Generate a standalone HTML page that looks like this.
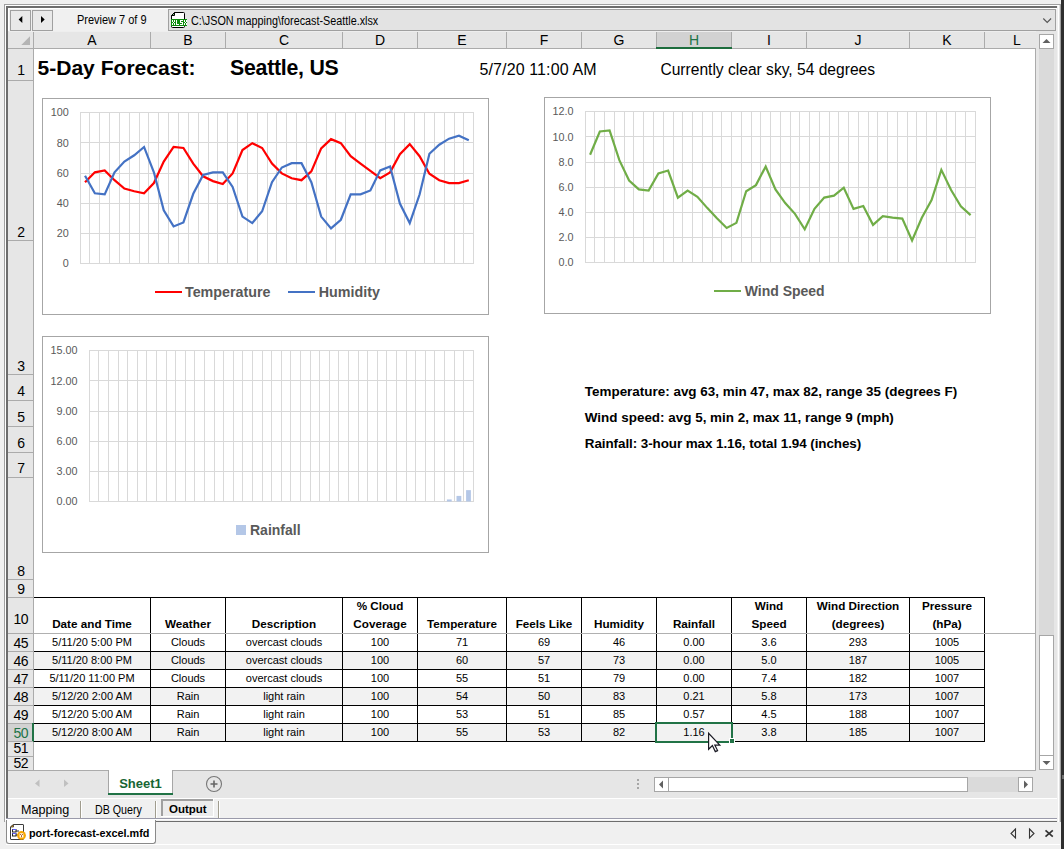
<!DOCTYPE html>
<html><head><meta charset="utf-8"><style>
html,body{margin:0;padding:0;width:1064px;height:849px;overflow:hidden;background:#f0f0f0;}
body{position:relative;font-family:"Liberation Sans", sans-serif;}
.r,.t{position:absolute;}
.t{white-space:nowrap;}
</style></head><body>
<div class="r" style="left:0px;top:0px;width:1064px;height:849px;background:#f0f0f0;"></div>
<div class="r" style="left:4px;top:4px;width:1056px;height:1px;background:#a0a0a0;"></div>
<div class="r" style="left:4px;top:4px;width:1px;height:818px;background:#a0a0a0;"></div>
<div class="r" style="left:5px;top:5px;width:1055px;height:1px;background:#ffffff;"></div>
<div class="r" style="left:5px;top:5px;width:1px;height:816px;background:#ffffff;"></div>
<div class="r" style="left:6px;top:6px;width:1051px;height:2px;background:#6d6d6d;"></div>
<div class="r" style="left:6px;top:6px;width:2px;height:812px;background:#6d6d6d;"></div>
<div class="r" style="left:1061px;top:0px;width:3px;height:849px;background:#2e2e2e;"></div>
<div class="r" style="left:1058px;top:5px;width:1px;height:817px;background:#ffffff;"></div>
<div class="r" style="left:1059px;top:5px;width:1px;height:817px;background:#e0e0e0;"></div>
<div class="r" style="left:1060px;top:4px;width:1px;height:818px;background:#a0a0a0;"></div>
<div class="r" style="left:1062px;top:775px;width:2px;height:4px;background:#707070;"></div>
<div class="r" style="left:8px;top:8px;width:160px;height:23px;background:#f0f0f0;"></div>
<div class="r" style="left:8px;top:8px;width:1049px;height:1px;background:#ffffff;"></div>
<div class="r" style="left:8px;top:8px;width:1px;height:23px;background:#ffffff;"></div>
<div class="r" style="left:10px;top:10px;width:21px;height:21px;background:#e9e9e9;border:1px solid #a0a0a0;box-sizing:border-box;"></div>
<div class="r" style="left:32px;top:10px;width:21px;height:21px;background:#e9e9e9;border:1px solid #a0a0a0;box-sizing:border-box;"></div>
<svg class="r" style="left:10px;top:10px" width="44" height="21"><path d="M8.6 9.5 L12.3 6 L12.3 13 Z" fill="#000"/><path d="M31 6 L34.7 9.5 L31 13 Z" fill="#000"/></svg>
<div class="t" style="left:77.00px;top:14.14px;font-size:12px;line-height:12px;color:#000;transform:scaleX(0.915);transform-origin:0 0;">Preview 7 of 9</div>
<div class="r" style="left:168px;top:9px;width:888px;height:22px;background:#e3e3e3;border:1px solid #a0a0a0;box-sizing:border-box;"></div>
<svg class="r" style="left:170px;top:11px" width="18" height="18">
<path d="M1.5 4.5 L4.5 1.5 H13.5 Q14.5 1.5 14.5 2.5 V15.5 Q14.5 16.5 13.5 16.5 H2.5 Q1.5 16.5 1.5 15.5 Z" fill="#fff" stroke="#000"/>
<path d="M1.5 4.5 L4.5 1.5 V4.5 Z" fill="#77cc77" stroke="#000"/>
<rect x="1" y="8" width="16" height="7" fill="#0b8c0b"/>
<g fill="#fff"><rect x="2" y="9" width="1" height="1"/><rect x="4" y="9" width="1" height="1"/><rect x="2" y="10" width="1" height="1"/><rect x="4" y="10" width="1" height="1"/><rect x="3" y="11" width="1" height="1"/><rect x="2" y="12" width="1" height="1"/><rect x="4" y="12" width="1" height="1"/><rect x="2" y="13" width="1" height="1"/><rect x="4" y="13" width="1" height="1"/><rect x="6" y="9" width="1" height="1"/><rect x="6" y="10" width="1" height="1"/><rect x="6" y="11" width="1" height="1"/><rect x="6" y="12" width="1" height="1"/><rect x="6" y="13" width="1" height="1"/><rect x="7" y="13" width="1" height="1"/><rect x="8" y="13" width="1" height="1"/><rect x="10" y="9" width="1" height="1"/><rect x="11" y="9" width="1" height="1"/><rect x="12" y="9" width="1" height="1"/><rect x="10" y="10" width="1" height="1"/><rect x="10" y="11" width="1" height="1"/><rect x="11" y="11" width="1" height="1"/><rect x="12" y="11" width="1" height="1"/><rect x="12" y="12" width="1" height="1"/><rect x="10" y="13" width="1" height="1"/><rect x="11" y="13" width="1" height="1"/><rect x="12" y="13" width="1" height="1"/><rect x="14" y="9" width="1" height="1"/><rect x="16" y="9" width="1" height="1"/><rect x="14" y="10" width="1" height="1"/><rect x="16" y="10" width="1" height="1"/><rect x="15" y="11" width="1" height="1"/><rect x="14" y="12" width="1" height="1"/><rect x="16" y="12" width="1" height="1"/><rect x="14" y="13" width="1" height="1"/><rect x="16" y="13" width="1" height="1"/></g>
</svg>
<div class="t" style="left:191.00px;top:15.04px;font-size:12px;line-height:12px;color:#000;transform:scaleX(0.9);transform-origin:0 0;">C:\JSON mapping\forecast-Seattle.xlsx</div>
<svg class="r" style="left:1042px;top:17px" width="11" height="8"><path d="M1.3 1.5 L5.2 5.5 L9.1 1.5" fill="none" stroke="#555" stroke-width="1.1"/></svg>
<div class="r" style="left:8px;top:31px;width:1049px;height:18px;background:#e6e6e6;"></div>
<div class="r" style="left:9px;top:31px;width:1048px;height:1px;background:#eeeeee;"></div>
<div class="r" style="left:657px;top:32px;width:74px;height:16px;background:#d2d2d2;"></div>
<div class="t" style="left:34.00px;width:116px;text-align:center;top:33.15px;font-size:14px;line-height:14px;color:#000;">A</div>
<div class="t" style="left:151.00px;width:74px;text-align:center;top:33.15px;font-size:14px;line-height:14px;color:#000;">B</div>
<div class="t" style="left:226.00px;width:116px;text-align:center;top:33.15px;font-size:14px;line-height:14px;color:#000;">C</div>
<div class="t" style="left:343.00px;width:74px;text-align:center;top:33.15px;font-size:14px;line-height:14px;color:#000;">D</div>
<div class="t" style="left:418.00px;width:88px;text-align:center;top:33.15px;font-size:14px;line-height:14px;color:#000;">E</div>
<div class="t" style="left:507.00px;width:74px;text-align:center;top:33.15px;font-size:14px;line-height:14px;color:#000;">F</div>
<div class="t" style="left:582.00px;width:74px;text-align:center;top:33.15px;font-size:14px;line-height:14px;color:#000;">G</div>
<div class="t" style="left:657.00px;width:74px;text-align:center;top:33.15px;font-size:14px;line-height:14px;color:#217346;">H</div>
<div class="t" style="left:732.00px;width:74px;text-align:center;top:33.15px;font-size:14px;line-height:14px;color:#000;">I</div>
<div class="t" style="left:807.00px;width:102px;text-align:center;top:33.15px;font-size:14px;line-height:14px;color:#000;">J</div>
<div class="t" style="left:910.00px;width:74px;text-align:center;top:33.15px;font-size:14px;line-height:14px;color:#000;">K</div>
<div class="t" style="left:986.00px;width:62px;text-align:center;top:33.15px;font-size:14px;line-height:14px;color:#000;">L</div>
<div class="r" style="left:33px;top:32px;width:1px;height:17px;background:#ababab;"></div>
<div class="r" style="left:150px;top:32px;width:1px;height:17px;background:#ababab;"></div>
<div class="r" style="left:225px;top:32px;width:1px;height:17px;background:#ababab;"></div>
<div class="r" style="left:342px;top:32px;width:1px;height:17px;background:#ababab;"></div>
<div class="r" style="left:417px;top:32px;width:1px;height:17px;background:#ababab;"></div>
<div class="r" style="left:506px;top:32px;width:1px;height:17px;background:#ababab;"></div>
<div class="r" style="left:581px;top:32px;width:1px;height:17px;background:#ababab;"></div>
<div class="r" style="left:656px;top:32px;width:1px;height:17px;background:#ababab;"></div>
<div class="r" style="left:731px;top:32px;width:1px;height:17px;background:#ababab;"></div>
<div class="r" style="left:806px;top:32px;width:1px;height:17px;background:#ababab;"></div>
<div class="r" style="left:909px;top:32px;width:1px;height:17px;background:#ababab;"></div>
<div class="r" style="left:984px;top:32px;width:1px;height:17px;background:#ababab;"></div>
<div class="r" style="left:8px;top:48px;width:1028px;height:1px;background:#ababab;"></div>
<div class="r" style="left:656px;top:47px;width:76px;height:2px;background:#1d6d3d;"></div>
<svg class="r" style="left:20px;top:35px" width="12" height="11"><path d="M10 1.3 L10 10 L1.3 10 Z" fill="#b4b4b4"/></svg>
<div class="r" style="left:34px;top:49px;width:1001px;height:721px;background:#ffffff;"></div>
<div class="r" style="left:1035px;top:48px;width:1px;height:723px;background:#ababab;"></div>
<div class="r" style="left:8px;top:49px;width:25px;height:721px;background:#e6e6e6;"></div>
<div class="r" style="left:33px;top:48px;width:1px;height:723px;background:#ababab;"></div>
<div class="t" style="left:8.00px;width:25px;text-align:center;top:63.15px;font-size:14px;line-height:14px;color:#000;letter-spacing:-0.6px;text-indent:0.6px;">1</div>
<div class="r" style="left:8px;top:80px;width:25px;height:1px;background:#ababab;"></div>
<div class="t" style="left:8.00px;width:25px;text-align:center;top:225.15px;font-size:14px;line-height:14px;color:#000;letter-spacing:-0.6px;text-indent:0.6px;">2</div>
<div class="r" style="left:8px;top:240px;width:25px;height:1px;background:#ababab;"></div>
<div class="t" style="left:8.00px;width:25px;text-align:center;top:359.15px;font-size:14px;line-height:14px;color:#000;letter-spacing:-0.6px;text-indent:0.6px;">3</div>
<div class="r" style="left:8px;top:374px;width:25px;height:1px;background:#ababab;"></div>
<div class="t" style="left:8.00px;width:25px;text-align:center;top:384.15px;font-size:14px;line-height:14px;color:#000;letter-spacing:-0.6px;text-indent:0.6px;">4</div>
<div class="r" style="left:8px;top:400px;width:25px;height:1px;background:#ababab;"></div>
<div class="t" style="left:8.00px;width:25px;text-align:center;top:410.15px;font-size:14px;line-height:14px;color:#000;letter-spacing:-0.6px;text-indent:0.6px;">5</div>
<div class="r" style="left:8px;top:426px;width:25px;height:1px;background:#ababab;"></div>
<div class="t" style="left:8.00px;width:25px;text-align:center;top:436.15px;font-size:14px;line-height:14px;color:#000;letter-spacing:-0.6px;text-indent:0.6px;">6</div>
<div class="r" style="left:8px;top:452px;width:25px;height:1px;background:#ababab;"></div>
<div class="t" style="left:8.00px;width:25px;text-align:center;top:461.15px;font-size:14px;line-height:14px;color:#000;letter-spacing:-0.6px;text-indent:0.6px;">7</div>
<div class="r" style="left:8px;top:477px;width:25px;height:1px;background:#ababab;"></div>
<div class="t" style="left:8.00px;width:25px;text-align:center;top:564.15px;font-size:14px;line-height:14px;color:#000;letter-spacing:-0.6px;text-indent:0.6px;">8</div>
<div class="r" style="left:8px;top:579px;width:25px;height:1px;background:#ababab;"></div>
<div class="t" style="left:8.00px;width:25px;text-align:center;top:582.15px;font-size:14px;line-height:14px;color:#000;letter-spacing:-0.6px;text-indent:0.6px;">9</div>
<div class="r" style="left:8px;top:597px;width:25px;height:1px;background:#ababab;"></div>
<div class="t" style="left:8.00px;width:25px;text-align:center;top:612.15px;font-size:14px;line-height:14px;color:#000;letter-spacing:-0.6px;text-indent:0.6px;">10</div>
<div class="r" style="left:8px;top:633px;width:25px;height:1px;background:#ababab;"></div>
<div class="t" style="left:8.00px;width:25px;text-align:center;top:636.15px;font-size:14px;line-height:14px;color:#000;letter-spacing:-0.6px;text-indent:0.6px;">45</div>
<div class="r" style="left:8px;top:651px;width:25px;height:1px;background:#ababab;"></div>
<div class="t" style="left:8.00px;width:25px;text-align:center;top:654.15px;font-size:14px;line-height:14px;color:#000;letter-spacing:-0.6px;text-indent:0.6px;">46</div>
<div class="r" style="left:8px;top:669px;width:25px;height:1px;background:#ababab;"></div>
<div class="t" style="left:8.00px;width:25px;text-align:center;top:672.15px;font-size:14px;line-height:14px;color:#000;letter-spacing:-0.6px;text-indent:0.6px;">47</div>
<div class="r" style="left:8px;top:687px;width:25px;height:1px;background:#ababab;"></div>
<div class="t" style="left:8.00px;width:25px;text-align:center;top:690.15px;font-size:14px;line-height:14px;color:#000;letter-spacing:-0.6px;text-indent:0.6px;">48</div>
<div class="r" style="left:8px;top:705px;width:25px;height:1px;background:#ababab;"></div>
<div class="t" style="left:8.00px;width:25px;text-align:center;top:708.15px;font-size:14px;line-height:14px;color:#000;letter-spacing:-0.6px;text-indent:0.6px;">49</div>
<div class="r" style="left:8px;top:723px;width:25px;height:1px;background:#ababab;"></div>
<div class="r" style="left:8px;top:724px;width:25px;height:17px;background:#d2d2d2;"></div>
<div class="r" style="left:32px;top:723px;width:2px;height:19px;background:#217346;"></div>
<div class="t" style="left:8.00px;width:25px;text-align:center;top:726.15px;font-size:14px;line-height:14px;color:#217346;letter-spacing:-0.6px;text-indent:0.6px;">50</div>
<div class="r" style="left:8px;top:741px;width:25px;height:1px;background:#ababab;"></div>
<div class="t" style="left:8.00px;width:25px;text-align:center;top:741.15px;font-size:14px;line-height:14px;color:#000;letter-spacing:-0.6px;text-indent:0.6px;">51</div>
<div class="r" style="left:8px;top:756px;width:25px;height:1px;background:#ababab;"></div>
<div class="t" style="left:8.00px;width:25px;text-align:center;top:756.15px;font-size:14px;line-height:14px;color:#000;letter-spacing:-0.6px;text-indent:0.6px;">52</div>
<div class="r" style="left:8px;top:770px;width:25px;height:1px;background:#ababab;"></div>
<div class="r" style="left:8px;top:770px;width:1028px;height:1px;background:#ababab;"></div>
<div class="t" style="left:37.50px;top:57.48px;font-size:21.05px;line-height:21.05px;color:#000;font-weight:bold;">5-Day Forecast:</div>
<div class="t" style="left:230.00px;top:57.97px;font-size:21.3px;line-height:21.3px;color:#000;font-weight:bold;letter-spacing:-0.25px;">Seattle, US</div>
<div class="t" style="left:479.50px;top:62.06px;font-size:16px;line-height:16px;color:#000;letter-spacing:0.12px;">5/7/20 11:00 AM</div>
<div class="t" style="left:660.40px;top:62.39px;font-size:15.6px;line-height:15.6px;color:#000;">Currently clear sky, 54 degrees</div>
<div class="t" style="left:584.80px;top:384.61px;font-size:13.45px;line-height:13.45px;color:#000;font-weight:bold;">Temperature: avg 63, min 47, max 82, range 35 (degrees F)</div>
<div class="t" style="left:584.80px;top:411.01px;font-size:13.45px;line-height:13.45px;color:#000;font-weight:bold;">Wind speed: avg 5, min 2, max 11, range 9 (mph)</div>
<div class="t" style="left:584.80px;top:436.71px;font-size:13.45px;line-height:13.45px;color:#000;font-weight:bold;letter-spacing:-0.08px;">Rainfall: 3-hour max 1.16, total 1.94 (inches)</div>
<div class="r" style="left:34px;top:652px;width:950px;height:17px;background:#f2f2f2;"></div>
<div class="r" style="left:34px;top:688px;width:950px;height:17px;background:#f2f2f2;"></div>
<div class="r" style="left:34px;top:724px;width:950px;height:17px;background:#f2f2f2;"></div>
<div class="t" style="left:34.00px;width:116px;text-align:center;top:617.70px;font-size:11.7px;line-height:11.7px;color:#000;font-weight:bold;">Date and Time</div>
<div class="t" style="left:151.00px;width:74px;text-align:center;top:617.70px;font-size:11.7px;line-height:11.7px;color:#000;font-weight:bold;">Weather</div>
<div class="t" style="left:226.00px;width:116px;text-align:center;top:617.70px;font-size:11.7px;line-height:11.7px;color:#000;font-weight:bold;">Description</div>
<div class="t" style="left:343.00px;width:74px;text-align:center;top:599.70px;font-size:11.7px;line-height:11.7px;color:#000;font-weight:bold;">% Cloud</div>
<div class="t" style="left:343.00px;width:74px;text-align:center;top:617.70px;font-size:11.7px;line-height:11.7px;color:#000;font-weight:bold;">Coverage</div>
<div class="t" style="left:418.00px;width:88px;text-align:center;top:617.70px;font-size:11.7px;line-height:11.7px;color:#000;font-weight:bold;">Temperature</div>
<div class="t" style="left:507.00px;width:74px;text-align:center;top:617.70px;font-size:11.7px;line-height:11.7px;color:#000;font-weight:bold;">Feels Like</div>
<div class="t" style="left:582.00px;width:74px;text-align:center;top:617.70px;font-size:11.7px;line-height:11.7px;color:#000;font-weight:bold;">Humidity</div>
<div class="t" style="left:657.00px;width:74px;text-align:center;top:617.70px;font-size:11.7px;line-height:11.7px;color:#000;font-weight:bold;">Rainfall</div>
<div class="t" style="left:732.00px;width:74px;text-align:center;top:599.70px;font-size:11.7px;line-height:11.7px;color:#000;font-weight:bold;">Wind</div>
<div class="t" style="left:732.00px;width:74px;text-align:center;top:617.70px;font-size:11.7px;line-height:11.7px;color:#000;font-weight:bold;">Speed</div>
<div class="t" style="left:807.00px;width:102px;text-align:center;top:599.70px;font-size:11.7px;line-height:11.7px;color:#000;font-weight:bold;">Wind Direction</div>
<div class="t" style="left:807.00px;width:102px;text-align:center;top:617.70px;font-size:11.7px;line-height:11.7px;color:#000;font-weight:bold;">(degrees)</div>
<div class="t" style="left:910.00px;width:74px;text-align:center;top:599.70px;font-size:11.7px;line-height:11.7px;color:#000;font-weight:bold;">Pressure</div>
<div class="t" style="left:910.00px;width:74px;text-align:center;top:617.70px;font-size:11.7px;line-height:11.7px;color:#000;font-weight:bold;">(hPa)</div>
<div class="t" style="left:34.00px;width:116px;text-align:center;top:636.89px;font-size:11px;line-height:11px;color:#000;">5/11/20 5:00 PM</div>
<div class="t" style="left:151.00px;width:74px;text-align:center;top:636.89px;font-size:11px;line-height:11px;color:#000;">Clouds</div>
<div class="t" style="left:226.00px;width:116px;text-align:center;top:636.89px;font-size:11px;line-height:11px;color:#000;">overcast clouds</div>
<div class="t" style="left:343.00px;width:74px;text-align:center;top:636.89px;font-size:11px;line-height:11px;color:#000;">100</div>
<div class="t" style="left:418.00px;width:88px;text-align:center;top:636.89px;font-size:11px;line-height:11px;color:#000;">71</div>
<div class="t" style="left:507.00px;width:74px;text-align:center;top:636.89px;font-size:11px;line-height:11px;color:#000;">69</div>
<div class="t" style="left:582.00px;width:74px;text-align:center;top:636.89px;font-size:11px;line-height:11px;color:#000;">46</div>
<div class="t" style="left:657.00px;width:74px;text-align:center;top:636.89px;font-size:11px;line-height:11px;color:#000;">0.00</div>
<div class="t" style="left:732.00px;width:74px;text-align:center;top:636.89px;font-size:11px;line-height:11px;color:#000;">3.6</div>
<div class="t" style="left:807.00px;width:102px;text-align:center;top:636.89px;font-size:11px;line-height:11px;color:#000;">293</div>
<div class="t" style="left:910.00px;width:74px;text-align:center;top:636.89px;font-size:11px;line-height:11px;color:#000;">1005</div>
<div class="t" style="left:34.00px;width:116px;text-align:center;top:654.89px;font-size:11px;line-height:11px;color:#000;">5/11/20 8:00 PM</div>
<div class="t" style="left:151.00px;width:74px;text-align:center;top:654.89px;font-size:11px;line-height:11px;color:#000;">Clouds</div>
<div class="t" style="left:226.00px;width:116px;text-align:center;top:654.89px;font-size:11px;line-height:11px;color:#000;">overcast clouds</div>
<div class="t" style="left:343.00px;width:74px;text-align:center;top:654.89px;font-size:11px;line-height:11px;color:#000;">100</div>
<div class="t" style="left:418.00px;width:88px;text-align:center;top:654.89px;font-size:11px;line-height:11px;color:#000;">60</div>
<div class="t" style="left:507.00px;width:74px;text-align:center;top:654.89px;font-size:11px;line-height:11px;color:#000;">57</div>
<div class="t" style="left:582.00px;width:74px;text-align:center;top:654.89px;font-size:11px;line-height:11px;color:#000;">73</div>
<div class="t" style="left:657.00px;width:74px;text-align:center;top:654.89px;font-size:11px;line-height:11px;color:#000;">0.00</div>
<div class="t" style="left:732.00px;width:74px;text-align:center;top:654.89px;font-size:11px;line-height:11px;color:#000;">5.0</div>
<div class="t" style="left:807.00px;width:102px;text-align:center;top:654.89px;font-size:11px;line-height:11px;color:#000;">187</div>
<div class="t" style="left:910.00px;width:74px;text-align:center;top:654.89px;font-size:11px;line-height:11px;color:#000;">1005</div>
<div class="t" style="left:34.00px;width:116px;text-align:center;top:672.89px;font-size:11px;line-height:11px;color:#000;">5/11/20 11:00 PM</div>
<div class="t" style="left:151.00px;width:74px;text-align:center;top:672.89px;font-size:11px;line-height:11px;color:#000;">Clouds</div>
<div class="t" style="left:226.00px;width:116px;text-align:center;top:672.89px;font-size:11px;line-height:11px;color:#000;">overcast clouds</div>
<div class="t" style="left:343.00px;width:74px;text-align:center;top:672.89px;font-size:11px;line-height:11px;color:#000;">100</div>
<div class="t" style="left:418.00px;width:88px;text-align:center;top:672.89px;font-size:11px;line-height:11px;color:#000;">55</div>
<div class="t" style="left:507.00px;width:74px;text-align:center;top:672.89px;font-size:11px;line-height:11px;color:#000;">51</div>
<div class="t" style="left:582.00px;width:74px;text-align:center;top:672.89px;font-size:11px;line-height:11px;color:#000;">79</div>
<div class="t" style="left:657.00px;width:74px;text-align:center;top:672.89px;font-size:11px;line-height:11px;color:#000;">0.00</div>
<div class="t" style="left:732.00px;width:74px;text-align:center;top:672.89px;font-size:11px;line-height:11px;color:#000;">7.4</div>
<div class="t" style="left:807.00px;width:102px;text-align:center;top:672.89px;font-size:11px;line-height:11px;color:#000;">182</div>
<div class="t" style="left:910.00px;width:74px;text-align:center;top:672.89px;font-size:11px;line-height:11px;color:#000;">1007</div>
<div class="t" style="left:34.00px;width:116px;text-align:center;top:690.89px;font-size:11px;line-height:11px;color:#000;">5/12/20 2:00 AM</div>
<div class="t" style="left:151.00px;width:74px;text-align:center;top:690.89px;font-size:11px;line-height:11px;color:#000;">Rain</div>
<div class="t" style="left:226.00px;width:116px;text-align:center;top:690.89px;font-size:11px;line-height:11px;color:#000;">light rain</div>
<div class="t" style="left:343.00px;width:74px;text-align:center;top:690.89px;font-size:11px;line-height:11px;color:#000;">100</div>
<div class="t" style="left:418.00px;width:88px;text-align:center;top:690.89px;font-size:11px;line-height:11px;color:#000;">54</div>
<div class="t" style="left:507.00px;width:74px;text-align:center;top:690.89px;font-size:11px;line-height:11px;color:#000;">50</div>
<div class="t" style="left:582.00px;width:74px;text-align:center;top:690.89px;font-size:11px;line-height:11px;color:#000;">83</div>
<div class="t" style="left:657.00px;width:74px;text-align:center;top:690.89px;font-size:11px;line-height:11px;color:#000;">0.21</div>
<div class="t" style="left:732.00px;width:74px;text-align:center;top:690.89px;font-size:11px;line-height:11px;color:#000;">5.8</div>
<div class="t" style="left:807.00px;width:102px;text-align:center;top:690.89px;font-size:11px;line-height:11px;color:#000;">173</div>
<div class="t" style="left:910.00px;width:74px;text-align:center;top:690.89px;font-size:11px;line-height:11px;color:#000;">1007</div>
<div class="t" style="left:34.00px;width:116px;text-align:center;top:708.89px;font-size:11px;line-height:11px;color:#000;">5/12/20 5:00 AM</div>
<div class="t" style="left:151.00px;width:74px;text-align:center;top:708.89px;font-size:11px;line-height:11px;color:#000;">Rain</div>
<div class="t" style="left:226.00px;width:116px;text-align:center;top:708.89px;font-size:11px;line-height:11px;color:#000;">light rain</div>
<div class="t" style="left:343.00px;width:74px;text-align:center;top:708.89px;font-size:11px;line-height:11px;color:#000;">100</div>
<div class="t" style="left:418.00px;width:88px;text-align:center;top:708.89px;font-size:11px;line-height:11px;color:#000;">53</div>
<div class="t" style="left:507.00px;width:74px;text-align:center;top:708.89px;font-size:11px;line-height:11px;color:#000;">51</div>
<div class="t" style="left:582.00px;width:74px;text-align:center;top:708.89px;font-size:11px;line-height:11px;color:#000;">85</div>
<div class="t" style="left:657.00px;width:74px;text-align:center;top:708.89px;font-size:11px;line-height:11px;color:#000;">0.57</div>
<div class="t" style="left:732.00px;width:74px;text-align:center;top:708.89px;font-size:11px;line-height:11px;color:#000;">4.5</div>
<div class="t" style="left:807.00px;width:102px;text-align:center;top:708.89px;font-size:11px;line-height:11px;color:#000;">188</div>
<div class="t" style="left:910.00px;width:74px;text-align:center;top:708.89px;font-size:11px;line-height:11px;color:#000;">1007</div>
<div class="t" style="left:34.00px;width:116px;text-align:center;top:726.89px;font-size:11px;line-height:11px;color:#000;">5/12/20 8:00 AM</div>
<div class="t" style="left:151.00px;width:74px;text-align:center;top:726.89px;font-size:11px;line-height:11px;color:#000;">Rain</div>
<div class="t" style="left:226.00px;width:116px;text-align:center;top:726.89px;font-size:11px;line-height:11px;color:#000;">light rain</div>
<div class="t" style="left:343.00px;width:74px;text-align:center;top:726.89px;font-size:11px;line-height:11px;color:#000;">100</div>
<div class="t" style="left:418.00px;width:88px;text-align:center;top:726.89px;font-size:11px;line-height:11px;color:#000;">55</div>
<div class="t" style="left:507.00px;width:74px;text-align:center;top:726.89px;font-size:11px;line-height:11px;color:#000;">53</div>
<div class="t" style="left:582.00px;width:74px;text-align:center;top:726.89px;font-size:11px;line-height:11px;color:#000;">82</div>
<div class="t" style="left:657.00px;width:74px;text-align:center;top:726.89px;font-size:11px;line-height:11px;color:#000;">1.16</div>
<div class="t" style="left:732.00px;width:74px;text-align:center;top:726.89px;font-size:11px;line-height:11px;color:#000;">3.8</div>
<div class="t" style="left:807.00px;width:102px;text-align:center;top:726.89px;font-size:11px;line-height:11px;color:#000;">185</div>
<div class="t" style="left:910.00px;width:74px;text-align:center;top:726.89px;font-size:11px;line-height:11px;color:#000;">1007</div>
<div class="r" style="left:34px;top:597px;width:951px;height:1px;background:#000;"></div>
<div class="r" style="left:34px;top:651px;width:951px;height:1px;background:#000;"></div>
<div class="r" style="left:34px;top:669px;width:951px;height:1px;background:#000;"></div>
<div class="r" style="left:34px;top:687px;width:951px;height:1px;background:#000;"></div>
<div class="r" style="left:34px;top:705px;width:951px;height:1px;background:#000;"></div>
<div class="r" style="left:34px;top:723px;width:951px;height:1px;background:#000;"></div>
<div class="r" style="left:34px;top:741px;width:951px;height:1px;background:#000;"></div>
<div class="r" style="left:150px;top:597px;width:1px;height:145px;background:#000;"></div>
<div class="r" style="left:225px;top:597px;width:1px;height:145px;background:#000;"></div>
<div class="r" style="left:342px;top:597px;width:1px;height:145px;background:#000;"></div>
<div class="r" style="left:417px;top:597px;width:1px;height:145px;background:#000;"></div>
<div class="r" style="left:506px;top:597px;width:1px;height:145px;background:#000;"></div>
<div class="r" style="left:581px;top:597px;width:1px;height:145px;background:#000;"></div>
<div class="r" style="left:656px;top:597px;width:1px;height:145px;background:#000;"></div>
<div class="r" style="left:731px;top:597px;width:1px;height:145px;background:#000;"></div>
<div class="r" style="left:806px;top:597px;width:1px;height:145px;background:#000;"></div>
<div class="r" style="left:909px;top:597px;width:1px;height:145px;background:#000;"></div>
<div class="r" style="left:984px;top:597px;width:1px;height:145px;background:#000;"></div>
<div class="r" style="left:34px;top:633px;width:1001px;height:1px;background:#b0b0b0;"></div>
<div class="r" style="left:655px;top:722px;width:78px;height:21px;border:2px solid #217346;box-sizing:border-box;"></div>
<div class="r" style="left:729px;top:738px;width:6px;height:6px;background:#217346;border:1px solid #fff;box-sizing:border-box;"></div>
<svg class="r" style="left:706px;top:731px" width="18" height="24"><path d="M2.6 2.3 L2.6 18.3 L6.4 14.6 L9.3 20.6 L11.6 19.6 L8.8 14.1 L13.8 14.1 Z" fill="#fff" stroke="#1a1a24" stroke-width="1.2" stroke-linejoin="miter"/></svg>
<svg class="r" style="left:42px;top:98px" width="447" height="217"><rect x="0.5" y="0.5" width="446" height="216" fill="#fff" stroke="#a6a6a6"/><path d="M38 14.5 H432 M38 44.5 H432 M38 75.5 H432 M38 105.5 H432 M38 135.5 H432 M38 165.5 H432 M38.5 14 V166 M47.5 14 V166 M57.5 14 V166 M67.5 14 V166 M77.5 14 V166 M87.5 14 V166 M97.5 14 V166 M106.5 14 V166 M116.5 14 V166 M126.5 14 V166 M136.5 14 V166 M146.5 14 V166 M156.5 14 V166 M166.5 14 V166 M175.5 14 V166 M185.5 14 V166 M195.5 14 V166 M205.5 14 V166 M215.5 14 V166 M225.5 14 V166 M234.5 14 V166 M244.5 14 V166 M254.5 14 V166 M264.5 14 V166 M274.5 14 V166 M284.5 14 V166 M293.5 14 V166 M303.5 14 V166 M313.5 14 V166 M323.5 14 V166 M333.5 14 V166 M343.5 14 V166 M352.5 14 V166 M362.5 14 V166 M372.5 14 V166 M382.5 14 V166 M392.5 14 V166 M402.5 14 V166 M412.5 14 V166 M421.5 14 V166 M431.5 14 V166" stroke="#d9d9d9" stroke-width="1" fill="none"/><text x="26.799999999999997" y="18.3" font-size="10.8" fill="#595959" text-anchor="end" font-family="Liberation Sans">100</text><text x="26.799999999999997" y="48.5" font-size="10.8" fill="#595959" text-anchor="end" font-family="Liberation Sans">80</text><text x="26.799999999999997" y="78.7" font-size="10.8" fill="#595959" text-anchor="end" font-family="Liberation Sans">60</text><text x="26.799999999999997" y="108.9" font-size="10.8" fill="#595959" text-anchor="end" font-family="Liberation Sans">40</text><text x="26.799999999999997" y="139.1" font-size="10.8" fill="#595959" text-anchor="end" font-family="Liberation Sans">20</text><text x="26.799999999999997" y="169.3" font-size="10.8" fill="#595959" text-anchor="end" font-family="Liberation Sans">0</text><path d="M43.02,84.16 L52.86,74.34 L62.70,72.38 L72.54,82.19 L82.38,90.50 L92.22,93.22 L102.06,95.33 L111.90,85.06 L121.74,63.62 L131.58,48.97 L141.42,50.03 L151.26,65.58 L161.10,78.27 L170.94,83.10 L180.78,85.97 L190.62,75.40 L200.46,52.00 L210.30,45.20 L220.14,50.03 L229.98,65.58 L239.82,75.40 L249.66,80.23 L259.50,82.19 L269.34,73.44 L279.18,50.33 L289.02,41.12 L298.86,45.20 L308.70,58.19 L318.54,65.58 L328.38,72.98 L338.22,80.23 L348.06,74.34 L357.90,56.22 L367.74,46.11 L377.58,58.19 L387.42,75.70 L397.26,82.19 L407.10,85.06 L416.94,85.06 L426.78,82.19" fill="none" stroke="#ff0000" stroke-width="2.2" stroke-linejoin="miter" stroke-linecap="butt"/><path d="M43.02,77.67 L52.86,95.33 L62.70,96.39 L72.54,74.34 L82.38,63.62 L92.22,57.28 L102.06,48.97 L111.90,74.34 L121.74,112.40 L131.58,128.40 L141.42,124.47 L151.26,95.78 L161.10,76.91 L170.94,74.34 L180.78,74.34 L190.62,88.99 L200.46,118.59 L210.30,125.08 L220.14,113.30 L229.98,84.16 L239.82,69.51 L249.66,65.13 L259.50,65.13 L269.34,84.16 L279.18,118.59 L289.02,130.36 L298.86,121.76 L308.70,96.39 L318.54,96.39 L328.38,92.46 L338.22,72.38 L348.06,68.45 L357.90,105.60 L367.74,125.08 L377.58,96.54 L387.42,55.77 L397.26,46.71 L407.10,40.67 L416.94,37.65 L426.78,42.18" fill="none" stroke="#4472c4" stroke-width="2.2" stroke-linejoin="miter" stroke-linecap="butt"/></svg>
<div class="r" style="left:155px;top:290.6px;width:27px;height:2.2px;background:#ff0000"></div>
<div class="r" style="left:288px;top:290.6px;width:27px;height:2.2px;background:#4472c4"></div>
<div class="t" style="left:185.00px;top:284.90px;font-size:14.3px;line-height:14.3px;color:#595959;font-weight:bold;">Temperature</div>
<div class="t" style="left:318.70px;top:284.90px;font-size:14.3px;line-height:14.3px;color:#595959;font-weight:bold;">Humidity</div>
<svg class="r" style="left:544px;top:97px" width="447" height="217"><rect x="0.5" y="0.5" width="446" height="216" fill="#fff" stroke="#a6a6a6"/><path d="M41 14.5 H432 M41 39.5 H432 M41 65.5 H432 M41 90.5 H432 M41 115.5 H432 M41 140.5 H432 M41 165.5 H432 M41.5 14 V166 M50.5 14 V166 M60.5 14 V166 M70.5 14 V166 M80.5 14 V166 M89.5 14 V166 M99.5 14 V166 M109.5 14 V166 M119.5 14 V166 M129.5 14 V166 M138.5 14 V166 M148.5 14 V166 M158.5 14 V166 M168.5 14 V166 M177.5 14 V166 M187.5 14 V166 M197.5 14 V166 M207.5 14 V166 M216.5 14 V166 M226.5 14 V166 M236.5 14 V166 M246.5 14 V166 M255.5 14 V166 M265.5 14 V166 M275.5 14 V166 M285.5 14 V166 M294.5 14 V166 M304.5 14 V166 M314.5 14 V166 M324.5 14 V166 M333.5 14 V166 M343.5 14 V166 M353.5 14 V166 M363.5 14 V166 M372.5 14 V166 M382.5 14 V166 M392.5 14 V166 M402.5 14 V166 M411.5 14 V166 M421.5 14 V166 M431.5 14 V166" stroke="#d9d9d9" stroke-width="1" fill="none"/><text x="29.5" y="18.3" font-size="10.8" fill="#595959" text-anchor="end" font-family="Liberation Sans">12.0</text><text x="29.5" y="43.5" font-size="10.8" fill="#595959" text-anchor="end" font-family="Liberation Sans">10.0</text><text x="29.5" y="68.6" font-size="10.8" fill="#595959" text-anchor="end" font-family="Liberation Sans">8.0</text><text x="29.5" y="93.8" font-size="10.8" fill="#595959" text-anchor="end" font-family="Liberation Sans">6.0</text><text x="29.5" y="119.0" font-size="10.8" fill="#595959" text-anchor="end" font-family="Liberation Sans">4.0</text><text x="29.5" y="144.1" font-size="10.8" fill="#595959" text-anchor="end" font-family="Liberation Sans">2.0</text><text x="29.5" y="169.3" font-size="10.8" fill="#595959" text-anchor="end" font-family="Liberation Sans">0.0</text><path d="M46.08,57.78 L55.84,34.50 L65.59,33.37 L75.35,63.19 L85.11,83.58 L94.86,92.39 L104.62,93.65 L114.38,76.41 L124.13,73.51 L133.89,100.69 L143.65,93.65 L153.41,99.81 L163.16,110.88 L172.92,121.20 L182.68,131.02 L192.43,125.86 L202.19,94.27 L211.95,88.11 L221.70,69.49 L231.46,92.39 L241.22,106.10 L250.98,116.80 L260.73,132.28 L270.49,111.89 L280.25,100.57 L290.00,98.68 L299.76,90.75 L309.52,111.89 L319.27,109.00 L329.03,127.87 L338.79,119.06 L348.55,120.70 L358.30,121.58 L368.06,143.48 L377.82,120.70 L387.57,103.08 L397.33,72.88 L407.09,93.02 L416.84,109.38 L426.60,118.18" fill="none" stroke="#70ad47" stroke-width="2.2" stroke-linejoin="miter" stroke-linecap="butt"/></svg>
<div class="r" style="left:714px;top:290.0px;width:27px;height:2.2px;background:#70ad47"></div>
<div class="t" style="left:744.70px;top:283.95px;font-size:14px;line-height:14px;color:#595959;font-weight:bold;">Wind Speed</div>
<svg class="r" style="left:42px;top:336px" width="447" height="217"><rect x="0.5" y="0.5" width="446" height="216" fill="#fff" stroke="#a6a6a6"/><path d="M47 14.5 H432 M47 44.5 H432 M47 75.5 H432 M47 105.5 H432 M47 135.5 H432 M47 165.5 H432 M47.5 14 V166 M56.5 14 V166 M66.5 14 V166 M76.5 14 V166 M85.5 14 V166 M95.5 14 V166 M104.5 14 V166 M114.5 14 V166 M124.5 14 V166 M133.5 14 V166 M143.5 14 V166 M152.5 14 V166 M162.5 14 V166 M172.5 14 V166 M181.5 14 V166 M191.5 14 V166 M200.5 14 V166 M210.5 14 V166 M220.5 14 V166 M229.5 14 V166 M239.5 14 V166 M248.5 14 V166 M258.5 14 V166 M268.5 14 V166 M277.5 14 V166 M287.5 14 V166 M296.5 14 V166 M306.5 14 V166 M316.5 14 V166 M325.5 14 V166 M335.5 14 V166 M344.5 14 V166 M354.5 14 V166 M364.5 14 V166 M373.5 14 V166 M383.5 14 V166 M392.5 14 V166 M402.5 14 V166 M412.5 14 V166 M421.5 14 V166 M431.5 14 V166" stroke="#d9d9d9" stroke-width="1" fill="none"/><text x="35.5" y="18.3" font-size="10.8" fill="#595959" text-anchor="end" font-family="Liberation Sans">15.00</text><text x="35.5" y="48.5" font-size="10.8" fill="#595959" text-anchor="end" font-family="Liberation Sans">12.00</text><text x="35.5" y="78.7" font-size="10.8" fill="#595959" text-anchor="end" font-family="Liberation Sans">9.00</text><text x="35.5" y="108.9" font-size="10.8" fill="#595959" text-anchor="end" font-family="Liberation Sans">6.00</text><text x="35.5" y="139.1" font-size="10.8" fill="#595959" text-anchor="end" font-family="Liberation Sans">3.00</text><text x="35.5" y="169.3" font-size="10.8" fill="#595959" text-anchor="end" font-family="Liberation Sans">0.00</text><rect x="404.90" y="163.44" width="4.80" height="2.06" fill="#b4c7e7"/><rect x="414.50" y="159.91" width="4.80" height="5.59" fill="#b4c7e7"/><rect x="424.10" y="154.13" width="4.80" height="11.37" fill="#b4c7e7"/></svg>
<div class="r" style="left:236px;top:525px;width:10px;height:10px;background:#b4c7e7;"></div>
<div class="t" style="left:250.00px;top:522.95px;font-size:14px;line-height:14px;color:#595959;font-weight:bold;">Rainfall</div>
<div class="r" style="left:1036px;top:31px;width:21px;height:740px;background:#e6e6e6;"></div>
<div class="r" style="left:1039px;top:49px;width:15px;height:586px;background:#dadada;"></div>
<div class="r" style="left:1039px;top:34px;width:15px;height:15px;background:#ffffff;border:1px solid #a6a6a6;box-sizing:border-box;"></div>
<svg class="r" style="left:1039px;top:34px" width="15" height="15"><path d="M3.5 9 L7.5 5 L11.5 9 Z" fill="#606060"/></svg>
<div class="r" style="left:1039px;top:635px;width:15px;height:121px;background:#ffffff;border:1px solid #a6a6a6;box-sizing:border-box;"></div>
<div class="r" style="left:1039px;top:755px;width:15px;height:15px;background:#ffffff;border:1px solid #a6a6a6;box-sizing:border-box;"></div>
<svg class="r" style="left:1039px;top:755px" width="15" height="15"><path d="M3.5 6 L7.5 10 L11.5 6 Z" fill="#606060"/></svg>
<div class="r" style="left:8px;top:771px;width:1049px;height:27px;background:#e6e6e6;"></div>
<svg class="r" style="left:30px;top:776px" width="45" height="14"><path d="M9.5 3.5 L5 7.5 L9.5 11 Z" fill="#c0c0c0"/><path d="M34 3.5 L38.5 7.5 L34 11 Z" fill="#c0c0c0"/></svg>
<div class="r" style="left:108px;top:770px;width:65px;height:25px;background:#ffffff;"></div>
<div class="r" style="left:108px;top:770px;width:1px;height:25px;background:#a6a6a6;"></div>
<div class="r" style="left:172px;top:770px;width:1px;height:25px;background:#a6a6a6;"></div>
<div class="r" style="left:108px;top:793px;width:65px;height:2px;background:#217346;"></div>
<div class="t" style="left:108.00px;width:65px;text-align:center;top:776.80px;font-size:13px;line-height:13px;color:#176534;font-weight:bold;">Sheet1</div>
<svg class="r" style="left:205px;top:775px" width="18" height="18"><circle cx="9" cy="9" r="7.5" fill="none" stroke="#777" stroke-width="1.1"/><path d="M9 5.5 V12.5 M5.5 9 H12.5" stroke="#666" stroke-width="1.6"/></svg>
<div class="r" style="left:637px;top:779px;width:2px;height:2px;background:#a6a6a6;"></div>
<div class="r" style="left:637px;top:783px;width:2px;height:2px;background:#a6a6a6;"></div>
<div class="r" style="left:637px;top:787px;width:2px;height:2px;background:#a6a6a6;"></div>
<div class="r" style="left:654px;top:777px;width:379px;height:15px;background:#dadada;"></div>
<div class="r" style="left:654px;top:777px;width:15px;height:15px;background:#ffffff;border:1px solid #a6a6a6;box-sizing:border-box;"></div>
<svg class="r" style="left:654px;top:777px" width="15" height="15"><path d="M9 3.5 L5 7.5 L9 11.5 Z" fill="#606060"/></svg>
<div class="r" style="left:668px;top:777px;width:300px;height:15px;background:#ffffff;border:1px solid #a6a6a6;box-sizing:border-box;"></div>
<div class="r" style="left:1018px;top:777px;width:15px;height:15px;background:#ffffff;border:1px solid #a6a6a6;box-sizing:border-box;"></div>
<svg class="r" style="left:1018px;top:777px" width="15" height="15"><path d="M6 3.5 L10 7.5 L6 11.5 Z" fill="#606060"/></svg>
<div class="r" style="left:8px;top:798px;width:1049px;height:1px;background:#ffffff;"></div>
<div class="r" style="left:8px;top:799px;width:1049px;height:19px;background:#f0f0f0;"></div>
<div class="r" style="left:80px;top:801px;width:1px;height:17px;background:#a09c8e;"></div>
<div class="r" style="left:81px;top:801px;width:1px;height:17px;background:#ffffff;"></div>
<div class="r" style="left:155px;top:801px;width:1px;height:17px;background:#a09c8e;"></div>
<div class="r" style="left:156px;top:801px;width:1px;height:17px;background:#ffffff;"></div>
<div class="r" style="left:218px;top:801px;width:1px;height:17px;background:#a09c8e;"></div>
<div class="r" style="left:219px;top:801px;width:1px;height:17px;background:#ffffff;"></div>
<div class="r" style="left:161px;top:799px;width:53px;height:18px;background:#ececec;"></div>
<div class="r" style="left:161px;top:799px;width:53px;height:2px;background:#a0a0a0;"></div>
<div class="r" style="left:161px;top:799px;width:2px;height:17px;background:#a0a0a0;"></div>
<div class="r" style="left:161px;top:816px;width:53px;height:1px;background:#ffffff;"></div>
<div class="r" style="left:213px;top:799px;width:1px;height:18px;background:#ffffff;"></div>
<div class="t" style="left:21.00px;top:803.64px;font-size:12px;line-height:12px;color:#000;transform:scaleX(1.05);transform-origin:0 0;">Mapping</div>
<div class="t" style="left:95.00px;top:803.64px;font-size:12px;line-height:12px;color:#000;transform:scaleX(0.89);transform-origin:0 0;">DB Query</div>
<div class="t" style="left:169.00px;top:803.57px;font-size:11.5px;line-height:11.5px;color:#000;font-weight:bold;">Output</div>
<div class="r" style="left:6px;top:818px;width:1051px;height:1px;background:#9a9aaa;"></div>
<div class="r" style="left:6px;top:819px;width:1051px;height:1px;background:#ffffff;"></div>
<div class="r" style="left:155px;top:821px;width:902px;height:1px;background:#6d6d6d;"></div>
<div class="r" style="left:6px;top:844px;width:1054px;height:1px;background:#ffffff;"></div>
<div class="r" style="left:6px;top:820px;width:150px;height:24px;background:#fff;border:1px solid #8a8a8a;border-top:none;border-radius:0 0 3px 3px;box-sizing:border-box"></div>
<svg class="r" style="left:8px;top:822px" width="20" height="20">
<path d="M2.5 5 L5.5 2.5 H15 Q15.5 2.5 15.5 3 V17 Q15.5 17.5 15 17.5 H3 Q2.5 17.5 2.5 17 Z" fill="#fff" stroke="#3c3c3c"/>
<path d="M2.5 5 L5.5 2.5 V5 Z" fill="#f0a000" stroke="#3c3c3c" stroke-width="0.8"/>
<rect x="4.5" y="7.5" width="3.5" height="2.5" fill="#fff" stroke="#222"/>
<rect x="4.5" y="11.5" width="3.5" height="2.5" fill="#fff" stroke="#222"/>
<path d="M4.5 7.5 H8 M4.5 11.5 H8" stroke="#6060ff"/>
<path d="M8 9 H11 M8 13 H10" stroke="#222"/>
<circle cx="13.5" cy="13.4" r="4.4" fill="#f7a600"/>
<rect x="11.6" y="11.3" width="3.8" height="4.2" fill="#fff"/>
<path d="M12 11.8 L13.5 13.6 L15 11.8 M13.5 13.6 V15.2" stroke="#b06020" stroke-width="1" fill="none"/>
</svg>
<div class="t" style="left:28.60px;top:827.69px;font-size:11px;line-height:11px;color:#000;font-weight:bold;transform:scaleX(0.985);transform-origin:0 0;">port-forecast-excel.mfd</div>
<svg class="r" style="left:1005px;top:826px" width="52" height="14">
<path d="M10.5 3 L6 7.5 L10.5 12 Z" fill="none" stroke="#333" stroke-width="1.1"/>
<path d="M24.5 3 L29 7.5 L24.5 12 Z" fill="none" stroke="#333" stroke-width="1.1"/>
<path d="M40.5 4.3 L47.8 10.7 M47.8 4.3 L40.5 10.7" stroke="#333" stroke-width="1.7"/>
</svg>
</body></html>
